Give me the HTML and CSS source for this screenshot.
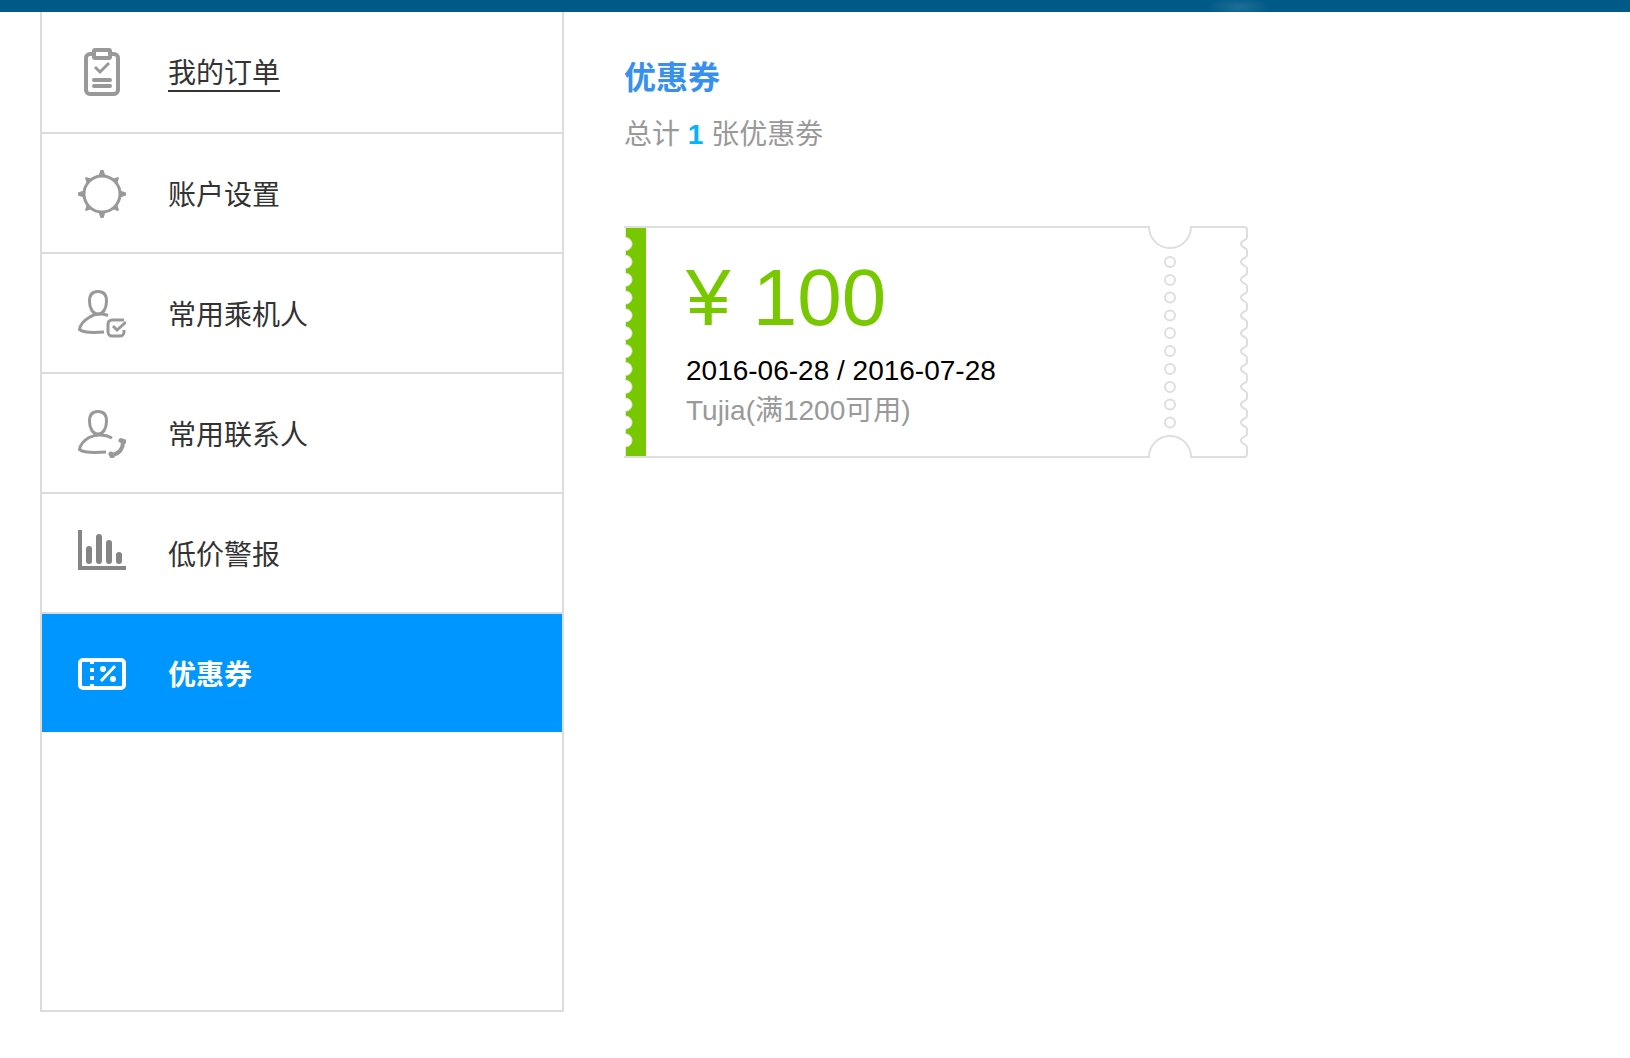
FILE: index.html
```html
<!DOCTYPE html>
<html lang="zh-CN">
<head>
    <meta charset="UTF-8">
    <meta name="viewport" content="width=device-width, initial-scale=1.0">
    <title>优惠券</title>
    <link rel="stylesheet" href="styles.css">
</head>
<body>
    <header class="banner"></header>
    <div class="page">
        <nav class="sidebar">
            <a class="menu-item hovered" href="#orders">
                <svg class="icon" viewBox="0 0 48 48" fill="none" stroke="#999" stroke-width="4">
                    <path d="M15 6h-3a4 4 0 0 0-4 4v32a4 4 0 0 0 4 4h24a4 4 0 0 0 4-4V10a4 4 0 0 0-4-4h-3"/>
                    <rect x="16" y="2" width="16" height="8" rx="1"/>
                    <path d="M17 19l5 5 9-9" stroke-width="3"/>
                    <path d="M16 32h16M16 38h16" stroke-width="4" stroke-linecap="round"/>
                </svg>
                <span>我的订单</span>
            </a>
            <a class="menu-item" href="#settings">
                <svg class="icon" viewBox="0 0 48 48" fill="none" stroke="#999">
                    <circle cx="24" cy="24" r="18" stroke-width="3"/>
                    <path d="M22.500 0h3l2 6h-7zM22.500 48h3l2-6h-7zM0 22.500v3l6 2v-7zM48 22.500v3l-6 2v-7zM7 8l1-1 6 2-5 5zM41 8l-1-1-6 2 5 5zM7 40l1 1 6-2-5-5zM41 40l-1 1-6-2 5-5z" fill="#999" stroke="none"/>
                </svg>
                <span>账户设置</span>
            </a>
            <a class="menu-item" href="#passengers">
                <svg class="icon" viewBox="0 0 48 48" fill="none" stroke="#999" stroke-width="3">
                    <path d="M20 1.500c-6 0-8.500 4-8.500 9.500 0 7 3 13 8.500 13s8.500-6 8.500-13c0-5.500-2.500-9.500-8.500-9.500z"/>
                    <path d="M30 25.500c-6-2-13-2-19 2-5 3-9 8-9.500 12 3 2.500 12 3.500 24.500 2.500"/>
                    <path d="M46 30H34a4 4 0 0 0-4 4v8a4 4 0 0 0 4 4h8a4 4 0 0 0 4-4v-2"/>
                    <path d="M35 36l4 4 9-8"/>
                </svg>
                <span>常用乘机人</span>
            </a>
            <a class="menu-item" href="#contacts">
                <svg class="icon" viewBox="0 0 48 48" fill="none" stroke="#999" stroke-width="3">
                    <path d="M20 1.500c-6 0-8.500 4-8.500 9.500 0 7 3 13 8.500 13s8.500-6 8.500-13c0-5.500-2.500-9.500-8.500-9.500z"/>
                    <path d="M34 28c-7-4-16-4-23-.5-5 3-9 8-9.500 12 3 2.500 13 3.500 26.500 2.500"/>
                    <path d="M45 32c0 7-3 11-10 13" stroke-width="4"/>
                    <path d="M43 30.500l3 1M33 44l1 2" stroke-width="5" stroke-linecap="round"/>
                </svg>
                <span>常用联系人</span>
            </a>
            <a class="menu-item" href="#alerts">
                <svg class="icon" viewBox="0 0 48 48" fill="none" stroke="#858585">
                    <path d="M2 0v38h46" stroke-width="4"/>
                    <path d="M11 19v12M21 7v24M31 13v18M41 25v6" stroke-width="6" stroke-linecap="round"/>
                </svg>
                <span>低价警报</span>
            </a>
            <a class="menu-item active" href="#coupons">
                <svg class="icon" viewBox="0 0 48 48" fill="none" stroke="#fff">
                    <rect x="2" y="10" width="44" height="28" rx="3" stroke-width="4"/>
                    <path d="M14 10v4M14 18v4M14 26v4M14 34v4" stroke-width="4"/>
                    <path d="M23 31l14-15" stroke-width="3"/>
                    <circle cx="25" cy="19" r="3" fill="#fff" stroke="none"/>
                    <circle cx="35" cy="29" r="3" fill="#fff" stroke="none"/>
                </svg>
                <span>优惠券</span>
            </a>
        </nav>
        <main class="content">
            <h1>优惠券</h1>
            <p class="total">总计 <strong>1</strong> 张优惠劵</p>
            <section class="coupon">
                <svg class="coupon-frame" viewBox="0 0 624 232" fill="none" stroke="#dedede" stroke-width="2">
                    <!-- perforated green edge -->
                    <path fill="#78c800" stroke="#e2e6dc" stroke-width="1" d="M22 1.500H1.500v10a6.500 6.500 0 0 1 0 13v4.850a6.500 6.500 0 0 1 0 13v4.850a6.500 6.500 0 0 1 0 13v4.850a6.500 6.500 0 0 1 0 13v4.850a6.500 6.500 0 0 1 0 13v4.850a6.500 6.500 0 0 1 0 13v4.850a6.500 6.500 0 0 1 0 13v4.850a6.500 6.500 0 0 1 0 13v4.850a6.500 6.500 0 0 1 0 13v4.850a6.500 6.500 0 0 1 0 13v4.850a6.500 6.500 0 0 1 0 13v4.850a6.500 6.500 0 0 1 0 13V230.500H22"/>
                    <!-- outline with the two notches and the torn right edge -->
                    <path d="M0 1H525a21 21 0 0 0 42 0H620q3 0 3 3v7.600c0 3-6 2.400-6 6.400s6 3.400 6 6.400v5.050c0 3-6 2.400-6 6.400s6 3.400 6 6.400v5.050c0 3-6 2.400-6 6.400s6 3.400 6 6.400v5.050c0 3-6 2.400-6 6.400s6 3.400 6 6.400v5.050c0 3-6 2.400-6 6.400s6 3.400 6 6.400v5.050c0 3-6 2.400-6 6.400s6 3.400 6 6.400v5.050c0 3-6 2.400-6 6.400s6 3.400 6 6.400v5.050c0 3-6 2.400-6 6.400s6 3.400 6 6.400v5.050c0 3-6 2.400-6 6.400s6 3.400 6 6.400v5.050c0 3-6 2.400-6 6.400s6 3.400 6 6.400v5.050c0 3-6 2.400-6 6.400s6 3.400 6 6.400v5.050c0 3-6 2.400-6 6.400s6 3.400 6 6.400V228q0 3-3 3H567a21 21 0 0 0-42 0H0"/>
                    <g>
                        <circle cx="546" cy="36" r="5"/>
                        <circle cx="546" cy="54" r="5"/>
                        <circle cx="546" cy="71.500" r="5"/>
                        <circle cx="546" cy="89.500" r="5"/>
                        <circle cx="546" cy="107" r="5"/>
                        <circle cx="546" cy="125" r="5"/>
                        <circle cx="546" cy="143" r="5"/>
                        <circle cx="546" cy="161" r="5"/>
                        <circle cx="546" cy="178.500" r="5"/>
                        <circle cx="546" cy="196.500" r="5"/>
                    </g>
                </svg>
                <div class="coupon-body">
                    <div class="price">¥ 100</div>
                    <div class="dates">2016-06-28 / 2016-07-28</div>
                    <div class="rule">Tujia(满1200可用)</div>
                </div>
            </section>
        </main>
    </div>
</body>
</html>
```
FILE: styles.css
```css
* {
    box-sizing: border-box;
}
body {
    margin: 0;
    background-color: #fff;
    color: #333;
    font-family: "Liberation Sans", "Noto Sans CJK SC", sans-serif;
    font-size: 28px;
    line-height: 40px;
}
.banner {
    height: 12px;
    background: radial-gradient(ellipse 32px 10px at 76% 60%, #1f7099, transparent), #005a87;
}
.page {
    display: flex;
    gap: 60px;
    padding: 0 40px 46px;
}
.sidebar {
    flex: 0 0 524px;
    min-height: 1000px;
    border: 2px solid #dcdcdc;
    border-top: none;
}
.menu-item {
    display: flex;
    align-items: center;
    gap: 42px;
    padding: 36px 36px 34px;
    border-bottom: 2px solid #dcdcdc;
    color: #333;
    text-decoration: none;
}
.menu-item:first-child {
    padding-bottom: 36px;
}
.menu-item span {
    padding-top: 6px;
    line-height: 32px;
    border-bottom: 2px solid transparent;
}
.menu-item.hovered span,
.menu-item:hover span {
    border-bottom-color: #333;
}
.menu-item.active {
    border-bottom: none;
    background-color: #0096ff;
    color: #fff;
    font-weight: bold;
}
.menu-item.active span {
    border-bottom-color: transparent;
}
.icon {
    flex: none;
    width: 48px;
    height: 48px;
}
.content {
    flex: 1;
    padding-top: 46px;
}
h1 {
    margin: 0;
    color: #3790ee;
    font-size: 32px;
    line-height: 40px;
}
.total {
    margin: 17px 0 71px;
    color: #999;
}
.total strong {
    color: #00b4ff;
}
.coupon {
    position: relative;
    width: 624px;
    max-width: 100%;
}
.coupon-frame {
    position: absolute;
    top: 0;
    left: 0;
    width: 100%;
}
.coupon-body {
    position: relative;
    padding: 32px 62px 26px;
}
.price {
    color: #78c800;
    font-size: 80px;
    line-height: 80px;
}
.dates {
    margin-top: 13px;
    color: #000;
}
.rule {
    color: #999;
}
```
